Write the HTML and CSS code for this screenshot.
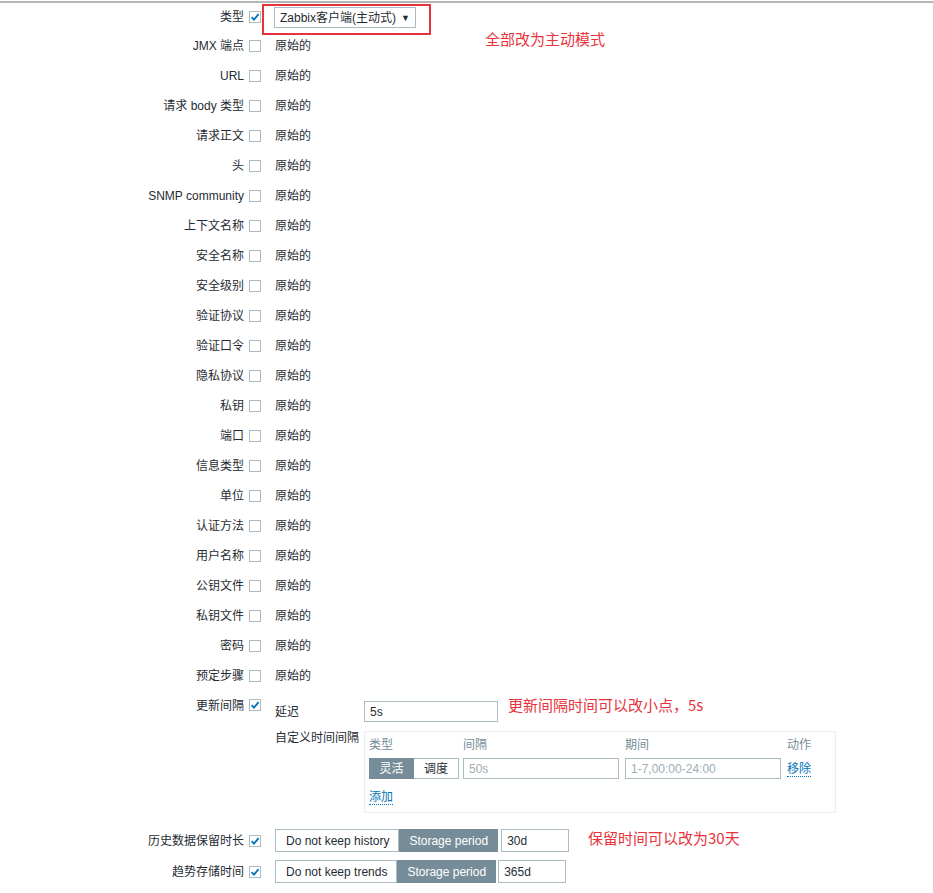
FILE: index.html
```html
<!DOCTYPE html>
<html lang="zh">
<head>
<meta charset="utf-8">
<title>批量更新</title>
<link rel="stylesheet" href="styles.css">
</head>
<body>
<div class="page">
  <div class="topline"></div>
  <div class="form">
    <div class="row first">
      <div class="lbl">类型</div>
      <span class="cb on"><svg viewBox="0 0 12 12" width="12" height="12"><path d="M2.6 6.2 L5 8.6 L9.6 3.2" fill="none" stroke="#0275b8" stroke-width="1.8"/></svg></span>
      <div class="val"><div class="select"><span>Zabbix客户端(主动式)</span><span class="arrow">▼</span></div></div>
    </div>
    <div class="row"><div class="lbl">JMX 端点</div><span class="cb"></span><div class="val">原始的</div></div>
    <div class="row"><div class="lbl">URL</div><span class="cb"></span><div class="val">原始的</div></div>
    <div class="row"><div class="lbl">请求 body 类型</div><span class="cb"></span><div class="val">原始的</div></div>
    <div class="row"><div class="lbl">请求正文</div><span class="cb"></span><div class="val">原始的</div></div>
    <div class="row"><div class="lbl">头</div><span class="cb"></span><div class="val">原始的</div></div>
    <div class="row"><div class="lbl">SNMP community</div><span class="cb"></span><div class="val">原始的</div></div>
    <div class="row"><div class="lbl">上下文名称</div><span class="cb"></span><div class="val">原始的</div></div>
    <div class="row"><div class="lbl">安全名称</div><span class="cb"></span><div class="val">原始的</div></div>
    <div class="row"><div class="lbl">安全级别</div><span class="cb"></span><div class="val">原始的</div></div>
    <div class="row"><div class="lbl">验证协议</div><span class="cb"></span><div class="val">原始的</div></div>
    <div class="row"><div class="lbl">验证口令</div><span class="cb"></span><div class="val">原始的</div></div>
    <div class="row"><div class="lbl">隐私协议</div><span class="cb"></span><div class="val">原始的</div></div>
    <div class="row"><div class="lbl">私钥</div><span class="cb"></span><div class="val">原始的</div></div>
    <div class="row"><div class="lbl">端口</div><span class="cb"></span><div class="val">原始的</div></div>
    <div class="row"><div class="lbl">信息类型</div><span class="cb"></span><div class="val">原始的</div></div>
    <div class="row"><div class="lbl">单位</div><span class="cb"></span><div class="val">原始的</div></div>
    <div class="row"><div class="lbl">认证方法</div><span class="cb"></span><div class="val">原始的</div></div>
    <div class="row"><div class="lbl">用户名称</div><span class="cb"></span><div class="val">原始的</div></div>
    <div class="row"><div class="lbl">公钥文件</div><span class="cb"></span><div class="val">原始的</div></div>
    <div class="row"><div class="lbl">私钥文件</div><span class="cb"></span><div class="val">原始的</div></div>
    <div class="row"><div class="lbl">密码</div><span class="cb"></span><div class="val">原始的</div></div>
    <div class="row"><div class="lbl">预定步骤</div><span class="cb"></span><div class="val">原始的</div></div>

    <div class="row tall">
      <div class="lbl">更新间隔</div>
      <span class="cb on"><svg viewBox="0 0 12 12" width="12" height="12"><path d="M2.6 6.2 L5 8.6 L9.6 3.2" fill="none" stroke="#0275b8" stroke-width="1.8"/></svg></span>
      <div class="val nested">
        <div class="sublbl mid">延迟</div>
        <div class="input w134">5s</div>
        <div class="sublbl">自定义时间间隔</div>
        <div class="box">
          <div class="grid">
            <div class="th">类型</div>
            <div class="th">间隔</div>
            <div class="th">期间</div>
            <div class="th">动作</div>
            <div class="seg small"><span class="sb dark">灵活</span><span class="sb">调度</span></div>
            <div class="input ph">50s</div>
            <div class="input ph">1-7,00:00-24:00</div>
            <div class="act"><span class="link">移除</span></div>
          </div>
          <div class="add"><span class="link">添加</span></div>
        </div>
      </div>
    </div>

    <div class="row r31">
      <div class="lbl">历史数据保留时长</div>
      <span class="cb on"><svg viewBox="0 0 12 12" width="12" height="12"><path d="M2.6 6.2 L5 8.6 L9.6 3.2" fill="none" stroke="#0275b8" stroke-width="1.8"/></svg></span>
      <div class="val flexval">
        <div class="seg big"><span class="sb">Do not keep history</span><span class="sb dark">Storage period</span></div>
        <div class="input big w68">30d</div>
      </div>
    </div>
    <div class="row r31">
      <div class="lbl">趋势存储时间</div>
      <span class="cb on"><svg viewBox="0 0 12 12" width="12" height="12"><path d="M2.6 6.2 L5 8.6 L9.6 3.2" fill="none" stroke="#0275b8" stroke-width="1.8"/></svg></span>
      <div class="val flexval">
        <div class="seg big"><span class="sb">Do not keep trends</span><span class="sb dark">Storage period</span></div>
        <div class="input big w68 tight">365d</div>
      </div>
    </div>
  </div>

  <div class="redbox"></div>
  <div class="note n1">全部改为主动模式</div>
  <div class="note n2">更新间隔时间可以改小点，5s</div>
  <div class="note n3">保留时间可以改为30天</div>
</div>
</body>
</html>
```

FILE: styles.css
```css
html, body {
  margin: 0;
  padding: 0;
  background: #ffffff;
}
body {
  font-family: "Liberation Sans", Arial, "Noto Sans CJK SC", sans-serif;
  font-size: 12px;
  color: #1f2c33;
}
.page {
  position: relative;
  width: 933px;
  height: 893px;
  overflow: hidden;
}
.topline {
  margin-top: 1px;
  height: 2px;
  background: #b4b4b4;
}
.form {
  display: flex;
  flex-direction: column;
}
.row {
  display: flex;
  align-items: center;
  height: 30px;
  line-height: 14px;
}
.row.first {
  height: 28px;
}
.lbl {
  width: 244px;
  text-align: right;
  white-space: nowrap;
  flex: none;
}
.cb {
  flex: none;
  width: 12px;
  height: 12px;
  margin-left: 5px;
  box-sizing: border-box;
  border: 1px solid #acbbc2;
  background: #fff;
  position: relative;
}
.cb svg {
  position: absolute;
  left: -1px;
  top: -1px;
}
.val {
  margin-left: 14px;
  white-space: nowrap;
}
.select {
  box-sizing: border-box;
  width: 142px;
  height: 21px;
  border: 1px solid #acbbc2;
  display: flex;
  align-items: center;
  justify-content: space-between;
  padding: 0 5px 0 5px;
  margin-left: -1px;
  margin-top: 1px;
  color: #1f2c33;
}
.arrow {
  font-size: 9px;
}

/* update interval */
.row.tall {
  height: auto;
  align-items: flex-start;
  margin-bottom: 12px;
}
.row.tall .lbl,
.row.tall .cb {
  margin-top: 8px;
}
.row.tall .val {
  margin-top: 10px;
}
.nested {
  display: grid;
  grid-template-columns: 89px auto;
  row-gap: 9px;
  align-items: start;
}
.sublbl {
  line-height: 14px;
}
.sublbl.mid {
  align-self: center;
}
.input {
  box-sizing: border-box;
  height: 21px;
  border: 1px solid #acbbc2;
  padding: 0 5px;
  display: flex;
  align-items: center;
  background: #fff;
  color: #1f2c33;
}
.w134 { width: 134px; }
.input.ph { color: #9eadb5; width: 156px; }
.box {
  box-sizing: border-box;
  width: 472px;
  border: 1px solid #ebeef0;
  padding: 6px 4px 8px 4px;
}
.grid {
  display: grid;
  grid-template-columns: 88px 156px 156px auto;
  column-gap: 6px;
  row-gap: 6px;
  align-items: center;
}
.th {
  color: #768d99;
  line-height: 14px;
}
.seg {
  display: flex;
}
.sb {
  box-sizing: border-box;
  border: 1px solid #acbbc2;
  background: #fff;
  display: flex;
  align-items: center;
  justify-content: center;
  color: #1f2c33;
  flex: none;
}
.sb + .sb { border-left: none; }
.sb.dark {
  background: #768d99;
  border-color: #768d99;
  color: #fff;
}
.seg.small .sb {
  width: 45px;
  height: 21px;
}
.seg.big .sb {
  height: 23px;
  padding: 0 9px 0 10px;
}
.link {
  color: #0275b8;
  border-bottom: 1px dotted #0275b8;
  line-height: 14px;
}
.add {
  margin-top: 11px;
  line-height: 14px;
}
.act {
  line-height: 14px;
}

/* storage rows */
.row.r31 {
  height: 31px;
}
.flexval {
  display: flex;
  align-items: center;
  gap: 3px;
}
.input.big { height: 23px; }
.w68 { width: 68px; }
.input.tight { margin-left: -1px; }

/* annotations drawn over the screenshot */
.redbox {
  position: absolute;
  left: 262px;
  top: 4px;
  width: 169px;
  height: 31px;
  box-sizing: border-box;
  border: 2px solid #e8333c;
}
.note {
  position: absolute;
  font-family: "Noto Sans CJK SC", "Liberation Sans", sans-serif;
  font-size: 15px;
  line-height: 18px;
  color: #e8333c;
  white-space: nowrap;
}
.n1 { left: 485px; top: 30px; }
.n2 { left: 508px; top: 696px; }
.n3 { left: 588px; top: 829px; }
```
